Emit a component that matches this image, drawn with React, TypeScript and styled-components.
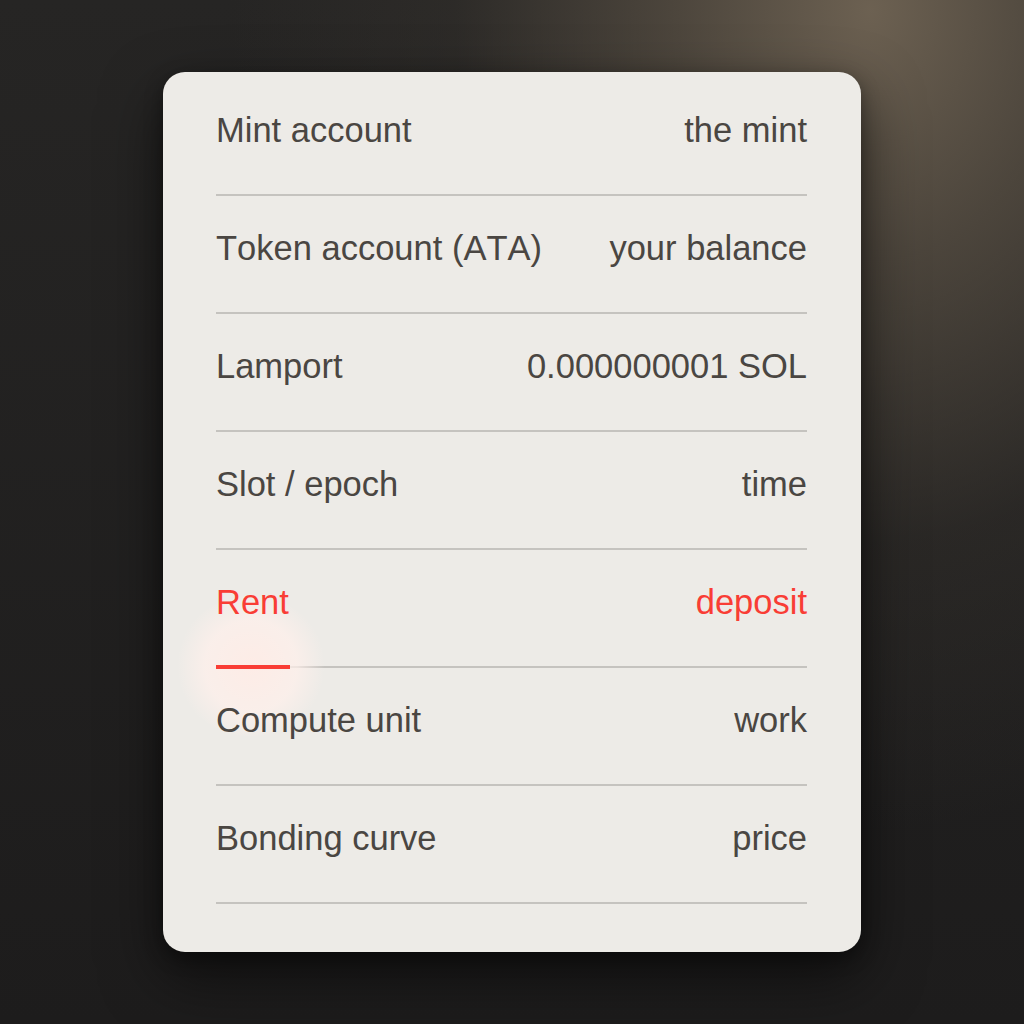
import styled, { createGlobalStyle } from 'styled-components';

const GlobalStyle = createGlobalStyle`
    html, body {
        margin: 0;
        padding: 0;
    }

    body {
        font-family: 'Liberation Sans', Arial, sans-serif;
        background: #1f1e1d;
    }
`;

const Page = styled.div`
    width: 1024px;
    height: 1024px;
    display: flex;
    align-items: center;
    justify-content: center;
    background:
        radial-gradient(ellipse 640px 820px at 870px 10px, rgba(112, 100, 84, 0.95) 0%, rgba(90, 81, 69, 0.75) 30%, rgba(55, 51, 46, 0.4) 65%, rgba(31, 30, 29, 0) 100%),
        linear-gradient(180deg, #262524 0%, #1d1c1c 100%);
`;

const Card = styled.div`
    width: 698px;
    box-sizing: border-box;
    padding: 6px 54px 48px 53px;
    background: #edebe7;
    border-radius: 22px;
    box-shadow:
        0 24px 60px rgba(0, 0, 0, 0.55),
        0 6px 18px rgba(0, 0, 0, 0.35);
    display: flex;
    flex-direction: column;
`;

const Row = styled.div<{ $active?: boolean }>`
    position: relative;
    display: flex;
    justify-content: space-between;
    align-items: center;
    padding: 34px 0 46px;
    border-bottom: 2px solid #c5c3bf;
    font-size: 34.5px;
    line-height: 36px;
    font-kerning: none;
    color: ${({ $active }) => ($active ? '#f93d35' : '#4a4642')};
`;

const Term = styled.span`
    position: relative;
`;

const Meaning = styled.span`
    text-align: right;
`;

const Glow = styled.div`
    position: absolute;
    left: -40px;
    bottom: -70px;
    width: 150px;
    height: 140px;
    border-radius: 50%;
    background: radial-gradient(circle, rgba(255, 236, 230, 0.9) 0%, rgba(255, 240, 235, 0.7) 45%, rgba(255, 240, 235, 0) 72%);
    pointer-events: none;
`;

const Underline = styled.div`
    position: absolute;
    left: 0;
    bottom: -3px;
    width: 74px;
    height: 4px;
    background: #f93d35;
`;

const terms = [
    { term: 'Mint account', meaning: 'the mint' },
    { term: 'Token account (ATA)', meaning: 'your balance' },
    { term: 'Lamport', meaning: '0.000000001 SOL' },
    { term: 'Slot / epoch', meaning: 'time' },
    { term: 'Rent', meaning: 'deposit', active: true },
    { term: 'Compute unit', meaning: 'work' },
    { term: 'Bonding curve', meaning: 'price' },
];

export default function App() {
    return (
        <>
            <GlobalStyle />
            <Page>
                <Card>
                    {terms.map(({ term, meaning, active }) => (
                        <Row key={term} $active={active}>
                            {active && <Glow />}
                            <Term>{term}</Term>
                            <Meaning>{meaning}</Meaning>
                            {active && <Underline />}
                        </Row>
                    ))}
                </Card>
            </Page>
        </>
    );
}
